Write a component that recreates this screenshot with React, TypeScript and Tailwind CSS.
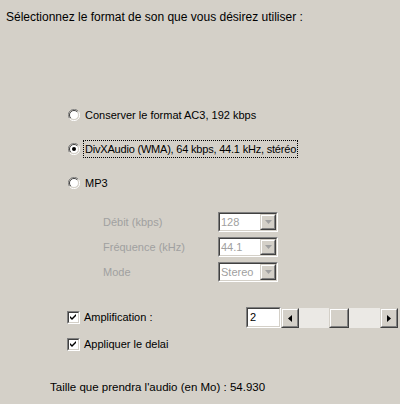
import React from "react";

function Radio({ checked }: { checked?: boolean }) {
  return (
    <svg width="12" height="12" viewBox="0 0 12 12" className="shrink-0">
      <path d="M10.5 2.5 A5.5 5.5 0 0 0 1.5 9.5" fill="none" stroke="#808080" strokeWidth="1" />
      <path d="M1.5 9.5 A5.5 5.5 0 0 0 10.5 2.5" fill="none" stroke="#ffffff" strokeWidth="1" />
      <circle cx="6" cy="6" r="4.5" fill="#ffffff" />
      <path d="M9.2 2.8 A4.5 4.5 0 0 0 2.8 9.2" fill="none" stroke="#404040" strokeWidth="1" />
      <path d="M2.8 9.2 A4.5 4.5 0 0 0 9.2 2.8" fill="none" stroke="#d4d0c8" strokeWidth="1" />
      {checked && <circle cx="6" cy="6" r="2" fill="#000000" />}
    </svg>
  );
}

function Check() {
  return (
    <div className="w-[13px] h-[13px] shrink-0 border-t border-l border-t-[#808080] border-l-[#808080] border-b border-r border-b-white border-r-white">
      <div className="w-full h-full border-t border-l border-t-[#404040] border-l-[#404040] border-b border-r border-b-[#d4d0c8] border-r-[#d4d0c8] bg-white">
        <svg width="9" height="9" viewBox="0 0 9 9">
          <path d="M1 3 L3 5 L7 1 L7 3 L3 7 L1 5 Z" fill="#000" />
        </svg>
      </div>
    </div>
  );
}

function Sunken({ className, children }: { className?: string; children?: React.ReactNode }) {
  return (
    <div className={"border-t border-l border-t-[#808080] border-l-[#808080] border-b border-r border-b-white border-r-white " + (className ?? "")}>
      <div className="w-full h-full border-t border-l border-t-[#404040] border-l-[#404040] border-b border-r border-b-[#d4d0c8] border-r-[#d4d0c8] flex items-center">
        {children}
      </div>
    </div>
  );
}

function RaisedBtn({ className, children }: { className?: string; children?: React.ReactNode }) {
  return (
    <div className={"bg-[#d4d0c8] border-t border-l border-t-[#d4d0c8] border-l-[#d4d0c8] border-b border-r border-b-[#404040] border-r-[#404040] " + (className ?? "")}>
      <div className="w-full h-full border-t border-l border-t-white border-l-white border-b border-r border-b-[#808080] border-r-[#808080] flex items-center justify-center">
        {children}
      </div>
    </div>
  );
}

function Combo({ value }: { value: string }) {
  return (
    <Sunken className="w-[60px] h-[20px] bg-white">
      <div className="flex-1 pl-[1px] text-[#a0a0a0] bg-white h-full flex items-center">{value}</div>
      <RaisedBtn className="w-[16px] h-full">
        <svg width="7" height="4" viewBox="0 0 7 4">
          <path d="M0 0 H7 L3.5 4 Z" fill="#a0a0a0" />
        </svg>
      </RaisedBtn>
    </Sunken>
  );
}

export default function App() {
  return (
    <div
      className="w-[400px] h-[404px] bg-[#d4d0c8] text-black text-[11px] leading-[13px] flex flex-col"
      style={{ fontFamily: '"Liberation Sans", Arial, sans-serif' }}
    >
      <div className="pt-[10px] pl-[6px] h-[24px] text-[12px] leading-[14px]">Sélectionnez le format de son que vous désirez utiliser :</div>

      <div className="mt-[82px] ml-[68px] h-[18px] flex items-center gap-[3px]">
        <Radio />
        <span className="px-[2px]">Conserver le format AC3, 192 kbps</span>
      </div>
      <div className="mt-[16px] ml-[68px] h-[18px] flex items-center gap-[3px]">
        <Radio checked />
        <span className="px-[1px] h-[18px] flex items-center border border-dotted border-black tracking-[-0.2px]">
          DivXAudio (WMA), 64 kbps, 44.1 kHz, stéréo
        </span>
      </div>
      <div className="mt-[16px] ml-[68px] h-[18px] flex items-center gap-[3px]">
        <Radio />
        <span className="px-[2px]">MP3</span>
      </div>

      <div className="mt-[20px] ml-[103px] w-[175px] flex flex-col gap-[5px] text-[#a0a0a0]">
        <div className="flex items-center justify-between h-[20px]">
          <span>Débit (kbps)</span>
          <Combo value="128" />
        </div>
        <div className="flex items-center justify-between h-[20px]">
          <span>Fréquence (kHz)</span>
          <Combo value="44.1" />
        </div>
        <div className="flex items-center justify-between h-[20px]">
          <span>Mode</span>
          <Combo value="Stereo" />
        </div>
      </div>

      <div className="mt-[25px] ml-[67px] h-[21px] flex items-center">
        <Check />
        <span className="ml-[4px]">Amplification :</span>
        <div className="ml-auto mr-[2px] flex h-[21px]">
          <Sunken className="w-[35px] h-[21px] bg-white">
            <span className="pl-[2px] text-black">2</span>
          </Sunken>
          <div className="w-[117px] h-[21px] flex bg-[#ebe9e5] border-t border-t-[#d4d0c8]">
            <RaisedBtn className="w-[18px] h-full">
              <svg width="4" height="7" viewBox="0 0 4 7">
                <path d="M4 0 V7 L0 3.5 Z" fill="#000" />
              </svg>
            </RaisedBtn>
            <div className="flex-1 flex">
              <div className="w-[30px]" />
              <RaisedBtn className="w-[20px] h-full" />
            </div>
            <RaisedBtn className="w-[18px] h-full">
              <svg width="4" height="7" viewBox="0 0 4 7">
                <path d="M0 0 V7 L4 3.5 Z" fill="#000" />
              </svg>
            </RaisedBtn>
          </div>
        </div>
      </div>
      <div className="mt-[7px] ml-[67px] h-[18px] flex items-center">
        <Check />
        <span className="ml-[4px]">Appliquer le delai</span>
      </div>

      <div className="mt-[27px] ml-[50px] h-[14px] flex items-center text-[11.5px]">Taille que prendra l'audio (en Mo) : 54.930</div>
    </div>
  );
}
